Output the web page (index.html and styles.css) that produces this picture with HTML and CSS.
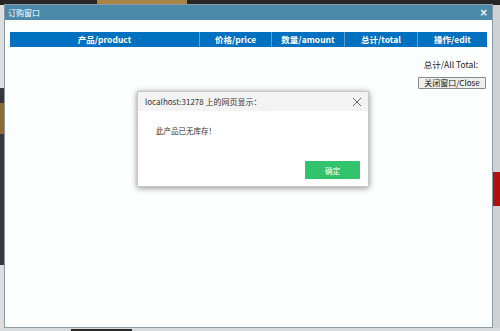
FILE: index.html
```html
<!DOCTYPE html>
<html>
<head>
<meta charset="utf-8">
<link rel="stylesheet" href="styles.css">
</head>
<body>
<div class="page">
  <div class="bg-top"><span class="bg-tan"></span></div>
  <div class="bg-left"><span class="bg-brown"></span></div>
  <div class="bg-right"><span class="bg-red"></span></div>
  <div class="bg-bottom"><span class="bg-dark"></span></div>

  <div class="window">
    <div class="titlebar">
      <span class="title">订购窗口</span>
      <span class="wclose">×</span>
    </div>
    <div class="content">
      <div class="thead">
        <div class="th c1">产品/product</div>
        <div class="th c2">价格/price</div>
        <div class="th c3">数量/amount</div>
        <div class="th c4">总计/total</div>
        <div class="th c5">操作/edit</div>
      </div>
      <div class="total">总计/All Total:</div>
      <div class="btnrow"><button class="closebtn">关闭窗口/Close</button></div>
    </div>
  </div>

  <div class="dialog">
    <div class="dhead">
      <span class="dtitle">localhost:31278 上的网页显示：</span>
      <svg class="dx" width="10" height="10" viewBox="0 0 10 10"><path d="M1 1L9 9M9 1L1 9" stroke="#666" stroke-width="1" fill="none"/></svg>
    </div>
    <div class="dbody">此产品已无库存！</div>
    <div class="dfoot"><button class="okbtn">确定</button></div>
  </div>
</div>
</body>
</html>
```
FILE: styles.css
```css
html, body { margin: 0; padding: 0; }
body {
  width: 500px; height: 331px; overflow: hidden;
  background: #dcdedf;
  font-family: "Noto Sans CJK SC", "Noto Sans", sans-serif;
}
.page { position: relative; width: 500px; height: 331px; }

.bg-top { position: absolute; left: 0; top: 0; width: 500px; height: 5px; background: #262626; }
.bg-tan { position: absolute; left: 97px; top: 0; width: 90px; height: 5px; background: #a88447; }
.bg-left { position: absolute; left: 0; top: 88px; width: 4px; height: 177px; background: #34383a; }
.bg-brown { position: absolute; left: 0; top: 15px; width: 4px; height: 31px; background: #8e6a35; }
.bg-right { position: absolute; left: 493px; top: 5px; width: 7px; height: 326px; background: #cfd2d4; }
.bg-red { position: absolute; left: 0; top: 167px; width: 7px; height: 34px; background: #b0100e; }
.bg-bottom { position: absolute; left: 0; top: 328px; width: 500px; height: 3px; background: #d8dadb; }
.bg-dark { position: absolute; left: 71px; top: 1px; width: 61px; height: 2px; background: #2a2a2a; }

.window {
  position: absolute; left: 4px; top: 4px; width: 487px; height: 322px;
  border: 1px solid #8c9ba3;
  background: #fdfefe;
  display: flex; flex-direction: column;
}
.titlebar {
  height: 15px; background: #4a89aa; color: #fff;
  display: flex; align-items: center; justify-content: space-between;
  padding: 0 4px 0 3px;
}
.title { font-size: 8px; line-height: 15px; }
.wclose { font-size: 10px; line-height: 15px; font-family: "DejaVu Sans", sans-serif; font-weight: bold; }

.content { padding: 12px 5px 0 5px; display: flex; flex-direction: column; }
.thead { display: flex; height: 15px; background: #0070c0; }
.th {
  color: #fff; font-size: 8.5px; font-weight: bold; text-align: center; line-height: 15px;
  border-right: 1px solid #5a9fd6;
  box-sizing: border-box;
}
.th:last-child { border-right: none; }
.c1 { width: 190px; }
.c2 { width: 72px; }
.c3 { width: 73px; }
.c4 { width: 73px; }
.c5 { flex: 1; }

.total { margin-top: 11px; text-align: right; font-size: 8.5px; color: #222; padding-right: 9px; line-height: 12px; }
.btnrow { display: flex; justify-content: flex-end; margin-top: 7px; padding-right: 1px; }
.closebtn {
  font-family: "Noto Sans CJK SC", sans-serif; font-size: 8px; line-height: 10px;
  width: 68px; height: 12px; padding: 0;
  background: #eeeeee; border: 1px solid #8a8a8a; border-radius: 1px; color: #111;
}

.dialog {
  position: absolute; left: 137px; top: 91px; width: 232px; height: 96px;
  background: #fff; border: 1px solid #c8c8c8;
  box-shadow: 0 1px 6px rgba(0,0,0,0.45);
  box-sizing: border-box;
  display: flex; flex-direction: column;
}
.dhead {
  height: 19px; background: #f3f3f3;
  display: flex; align-items: center; justify-content: space-between;
  padding: 0 6px 0 7px;
}
.dtitle { font-size: 8px; color: #333; }
.dbody { font-size: 7.5px; color: #333; padding: 15px 0 0 18px; line-height: 10px; flex: 1; }
.dfoot { display: flex; justify-content: flex-end; padding: 0 8px 7px 0; }
.okbtn {
  width: 55px; height: 18px; padding: 0; border: none; border-radius: 1px;
  background: #31c46c; color: #fff; font-size: 7.5px;
  font-family: "Noto Sans CJK SC", sans-serif;
}
```
